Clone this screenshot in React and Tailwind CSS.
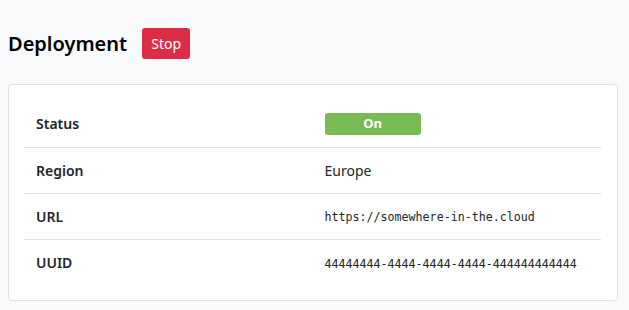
import React from 'react'

const rows = [
  { label: 'Status', kind: 'status', value: 'On' },
  { label: 'Region', kind: 'text', value: 'Europe' },
  { label: 'URL', kind: 'mono', value: 'https://somewhere-in-the.cloud' },
  { label: 'UUID', kind: 'mono', value: '44444444-4444-4444-4444-444444444444' },
]

const App = () => {
  return (
    <div className="min-h-[310px] bg-[#f8f9fa] px-2 pt-[28px] text-[#212529] [font-family:'Noto_Sans','Open_Sans',sans-serif]">
      {/* Header */}
      <div className="flex items-center h-[31px]">
        <h2 className="text-[20px] font-semibold leading-none text-black">Deployment</h2>
        <button className="ml-[15px] h-[31px] px-[9px] rounded-[3px] bg-[#dc2d47] text-white text-[14px] leading-none">
          Stop
        </button>
      </div>

      {/* Card */}
      <div className="mt-[25px] w-[610px] bg-white border border-[#dfe1e4] rounded-[4px] pl-[15px] pr-[16px] pt-[16px] pb-[15px]">
        <table className="w-full border-collapse text-[14px]">
          <tbody>
            {rows.map((row, idx) => (
              <tr
                key={row.label}
                className={idx < rows.length - 1 ? 'h-[46px] border-b border-[#dee2e6]' : 'h-[46px]'}
              >
                <td className="w-1/2 px-3 font-semibold">{row.label}</td>
                <td className="w-1/2 px-3">
                  {row.kind === 'status' ? (
                    <span className="inline-flex items-center justify-center w-[96px] h-[22px] rounded-[3px] bg-[#7aba52] text-white text-[13px] font-bold">
                      {row.value}
                    </span>
                  ) : row.kind === 'mono' ? (
                    <span className="text-[11.65px] [font-family:'DejaVu_Sans_Mono',monospace]">{row.value}</span>
                  ) : (
                    row.value
                  )}
                </td>
              </tr>
            ))}
          </tbody>
        </table>
      </div>
    </div>
  )
}

export default App
